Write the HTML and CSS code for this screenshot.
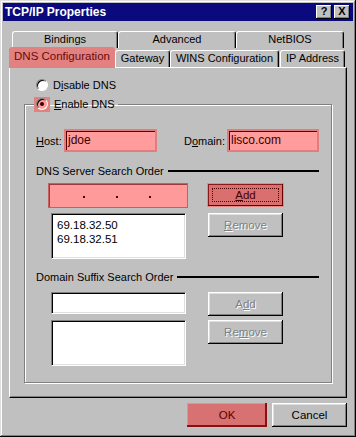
FILE: index.html
```html
<!DOCTYPE html>
<html>
	<head>
		<meta charset="utf-8">
		<title>TCP/IP Properties</title>
		<link rel="stylesheet" href="styles.css">
	</head>
	<body>
		<div class="window">
			<div class="titlebar">
				<span class="title">TCP/IP Properties</span>
				<span class="title-buttons"><span class="tbtn">?</span><span class="tbtn close">X</span></span>
			</div>

			<div class="tabs">
				<div class="tab-row back">
					<div class="tab t-bindings">Bindings</div>
					<div class="tab t-advanced">Advanced</div>
					<div class="tab t-netbios">NetBIOS</div>
				</div>
				<div class="tab-row front">
					<div class="tab selected t-dns">DNS Configuration</div>
					<div class="tab t-gateway">Gateway</div>
					<div class="tab t-wins">WINS Configuration</div>
					<div class="tab t-ip">IP Address</div>
				</div>
			</div>

			<div class="panel">
				<div class="radio-row">
					<span class="radio"></span><span>D<u>i</u>sable DNS</span>
				</div>

				<fieldset class="group">
					<legend class="group-legend">
						<span class="radio-hl"><span class="radio checked"></span></span><span><u>E</u>nable DNS</span>
					</legend>
					<div class="group-body">
						<div class="host-row">
							<span class="host-label"><u>H</u>ost:</span>
							<span class="field pink host-field">jdoe</span>
							<span class="domain-label">D<u>o</u>main:</span>
							<span class="field pink domain-field">lisco.com</span>
						</div>

						<div class="section-head first"><span>DNS Server Search Order</span><span class="rule"></span></div>
						<div class="list-grid server">
							<div class="ip-field">
								<span class="ip-seg"></span><span class="ip-dot"></span>
								<span class="ip-seg"></span><span class="ip-dot"></span>
								<span class="ip-seg"></span><span class="ip-dot"></span>
							</div>
							<div class="btn focused"><span class="focus-ring"><u>A</u>dd</span></div>
							<div class="field list">
								<div>69.18.32.50</div>
								<div>69.18.32.51</div>
							</div>
							<div class="btn disabled"><u>R</u>emove</div>
						</div>

						<div class="section-head second"><span>Domain Suffix Search Order</span><span class="rule"></span></div>
						<div class="list-grid suffix">
							<div class="field entry"></div>
							<div class="btn disabled">A<u>d</u>d</div>
							<div class="field list"></div>
							<div class="btn disabled">Re<u>m</u>ove</div>
						</div>
					</div>
				</fieldset>
			</div>

			<div class="footer">
				<div class="btn ok">OK</div>
				<div class="btn cancel">Cancel</div>
			</div>
		</div>
	</body>
</html>
```

FILE: styles.css
```css
body {
	margin: 0;
	background: #c0c0c0;
	font-family: "Liberation Sans", Arial, sans-serif;
	font-size: 11px;
	color: #000;
}

u {
	text-decoration: underline;
	text-underline-offset: 1px;
}

.window {
	box-sizing: border-box;
	width: 356px;
	height: 437px;
	padding: 3px;
	background: #c0c0c0;
	box-shadow: inset -1px -1px #000, inset 1px 1px #dfdfdf, inset -2px -2px #808080, inset 2px 2px #fff;
}

/* title bar */
.titlebar {
	height: 18px;
	background: #0a0a7e;
	display: flex;
	align-items: center;
	justify-content: space-between;
	padding: 0 3px 0 2px;
}

.title {
	color: #fff;
	font-weight: 700;
	font-size: 12px;
}

.title-buttons {
	display: flex;
	gap: 2px;
}

.tbtn {
	box-sizing: border-box;
	width: 16px;
	height: 14px;
	background: #c0c0c0;
	box-shadow: inset -1px -1px #000, inset 1px 1px #fff, inset -2px -2px #808080;
	font-weight: 700;
	font-size: 11px;
	line-height: 13px;
	text-align: center;
}

/* tabs */
.tabs {
	margin: 10px 0 0 6px;
}

.tab-row {
	display: flex;
	align-items: flex-end;
}

.tab-row.back {
	height: 17px;
	padding-left: 3px;
}

.tab-row.front {
	height: 19px;
	position: relative;
}

.tab {
	box-sizing: border-box;
	height: 17px;
	border: 1px solid #fff;
	border-right-color: #000;
	border-bottom: none;
	border-radius: 3px 3px 0 0;
	box-shadow: inset -1px 0 #808080;
	background: #c0c0c0;
	text-align: center;
	line-height: 15px;
}

.t-bindings { width: 106px; }
.t-advanced { width: 118px; }
.t-netbios { width: 108px; }
.t-dns { width: 106px; }
.t-gateway { width: 55px; }
.t-wins { width: 109px; margin-right: 1px; }
.t-ip { width: 65px; }

.tab.selected {
	height: 21px;
	margin-bottom: -1px;
	position: relative;
	z-index: 1;
	background: #e38181;
	border-color: #e38181;
	box-shadow: none;
	color: #6a0b0b;
	line-height: 17px;
	font-size: 11.5px;
}

/* page panel */
.panel {
	box-sizing: border-box;
	margin-left: 6px;
	width: 338px;
	height: 331px;
	border: 1px solid #fff;
	border-right-color: #000;
	border-bottom-color: #000;
	box-shadow: inset -1px -1px #808080;
	padding-top: 9px;
}

.radio-row {
	display: flex;
	align-items: center;
	gap: 5px;
	height: 16px;
	margin-left: 26px;
}

.radio {
	box-sizing: border-box;
	display: inline-block;
	width: 12px;
	height: 12px;
	border-radius: 50%;
	border: 1px solid;
	border-color: #808080 #fff #fff #808080;
	background: #fff;
	box-shadow: inset 1px 1px #000;
	position: relative;
}

.radio.checked {
	background: #ff9d9d;
}

.radio.checked::after {
	content: "";
	position: absolute;
	left: 3px;
	top: 3px;
	width: 4px;
	height: 4px;
	border-radius: 50%;
	background: #3a0000;
}

/* group box */
.group {
	box-sizing: border-box;
	margin: 3px 0 0 14px;
	padding: 0;
	width: 308px;
	height: 287px;
	border: 1px solid #808080;
	box-shadow: inset 1px 1px #fff, 1px 1px #fff;
}

.group-legend {
	margin-left: 9px;
	padding: 0 3px 0 0;
	height: 16px;
	display: flex;
	align-items: center;
	gap: 4px;
}

.radio-hl {
	display: inline-flex;
	align-items: center;
	justify-content: center;
	width: 16px;
	height: 15px;
	background: #e38181;
}

.group-body {
	padding-left: 11px;
}

.host-row {
	display: flex;
	align-items: center;
	margin-top: 17px;
	height: 23px;
}

.host-label {
	width: 28px;
}

.domain-label {
	width: 43px;
	margin-left: 27px;
}

.field {
	box-sizing: border-box;
	background: #fff;
	border: 1px solid;
	border-color: #808080 #fff #fff #808080;
	box-shadow: inset 1px 1px #000, inset -1px -1px #dfdfdf;
}

.field.pink {
	height: 23px;
	background: #ff9c9c;
	border: 2px solid #e37c7c;
	box-shadow: inset 1px 1px #5a0000;
	padding: 0 0 0 2px;
	line-height: 19px;
	font-size: 12px;
	color: #3a0000;
}

.host-field { width: 93px; }
.domain-field { width: 92px; }

.section-head {
	display: flex;
	align-items: center;
	height: 14px;
	padding-right: 12px;
}

.section-head.first { margin-top: 12px; }
.section-head.second { margin-top: 11px; }

.rule {
	flex: 1;
	height: 2px;
	background: #000;
	margin-left: 4px;
}

.list-grid {
	display: grid;
	grid-template-columns: 140px 77px;
	column-gap: 19px;
	margin-left: 12px;
	align-items: start;
}

.list-grid.server {
	margin-top: 5px;
	grid-template-rows: 25px 46px;
	row-gap: 5px;
}

.list-grid.suffix {
	margin-top: 8px;
	grid-template-rows: 22px 46px;
	row-gap: 6px;
}

.ip-field {
	box-sizing: border-box;
	height: 25px;
	background: #ff9a9a;
	border: 1px solid #c85f5f;
	box-shadow: inset 1px 1px #a03a3a;
	display: flex;
	align-items: flex-end;
	padding: 0 0 9px 2px;
}

.ip-seg {
	width: 32px;
}

.ip-dot {
	width: 2px;
	height: 2px;
	background: #4a0000;
	margin-right: -1px;
}

.list-grid .field.entry,
.list-grid .field.list {
	margin-left: 3px;
	width: 135px;
}

.field.entry {
	height: 22px;
}

.field.list {
	height: 46px;
	padding: 4px 0 0 5px;
	font-size: 11.5px;
	line-height: 14px;
}

/* buttons */
.btn {
	box-sizing: border-box;
	width: 75px;
	height: 24px;
	margin-left: 1px;
	background: #c0c0c0;
	box-shadow: inset -1px -1px #000, inset 1px 1px #fff, inset -2px -2px #808080, inset 2px 2px #dfdfdf;
	display: flex;
	align-items: center;
	justify-content: center;
	font-size: 11.5px;
}

.btn.disabled {
	color: #808080;
	text-shadow: 1px 1px #fff;
}

.btn.focused {
	width: 77px;
	margin-left: 0;
	background: #d96f6f;
	box-shadow: inset 0 0 0 1px #e58989, inset -2px -2px #6a0000, inset 2px 2px #8a1a1a;
	color: #4a0000;
}

.focus-ring {
	box-sizing: border-box;
	width: 67px;
	height: 14px;
	border: 1px dotted #4a0000;
	text-align: center;
	line-height: 12px;
}

.footer {
	display: flex;
	justify-content: flex-end;
	gap: 4px;
	margin-top: 5px;
	padding-right: 6px;
}

.btn.ok {
	width: 80px;
	background: #d87171;
	box-shadow: inset -2px -2px #8a1010, inset 1px 1px #e89090;
	color: #5a0000;
}
```
